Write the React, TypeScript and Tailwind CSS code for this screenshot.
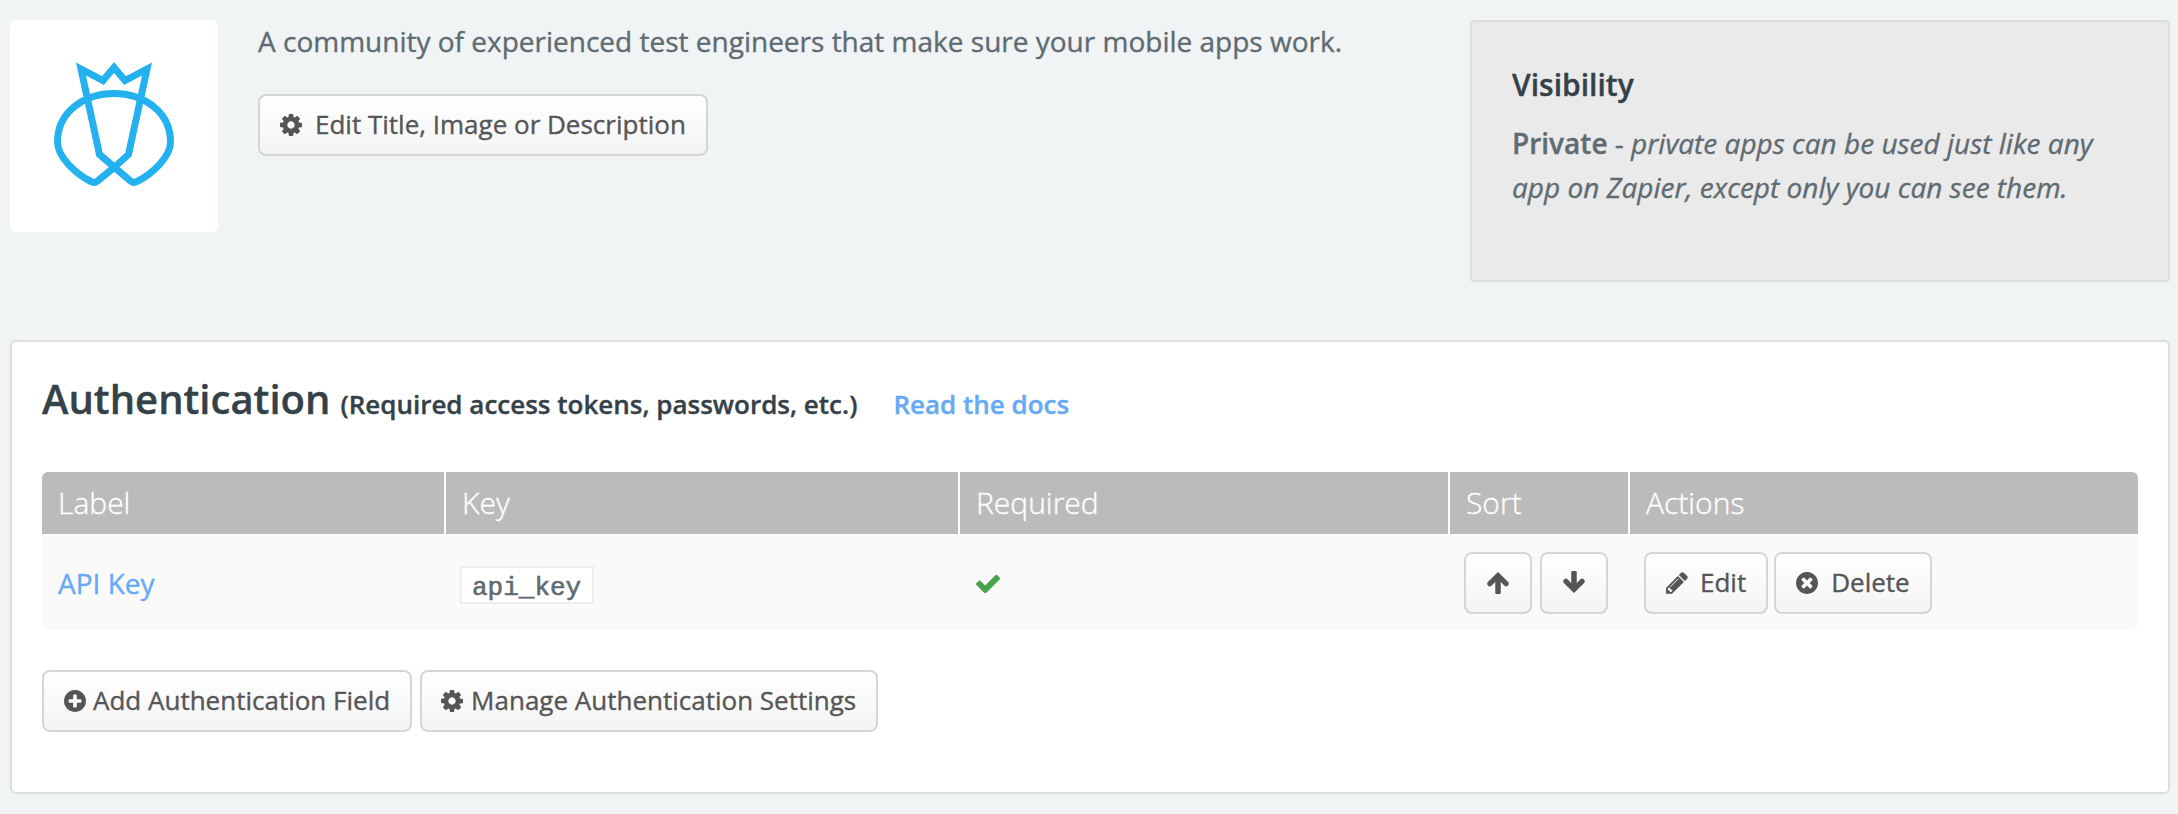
import React from "react";
import type { ReactNode } from "react";

const PATHS = {
  cog: "M1024 896q0-106-75-181t-181-75-181 75-75 181 75 181 181 75 181-75 75-181zm512-109v222q0 12-8 23t-20 13l-185 28q-19 54-39 91 35 50 107 138 10 12 10 25t-9 23q-27 37-99 108t-94 71q-12 0-26-9l-138-108q-44 23-91 38-16 136-29 186-7 28-36 28h-222q-14 0-24.500-8.500t-11.500-21.500l-28-184q-49-16-90-37l-141 107q-10 9-25 9-14 0-25-11-126-114-165-168-7-10-7-23 0-12 8-23 15-21 51-66.500t54-70.500q-27-50-41-99l-183-27q-13-2-21-12.500t-8-23.500v-222q0-12 8-23t19-13l186-28q14-46 39-92-40-57-107-138-10-12-10-24 0-10 9-23 26-36 98.500-107.500t94.500-71.500q13 0 26 10l138 107q44-23 91-38 16-136 29-186 7-28 36-28h222q14 0 24.500 8.500t11.500 21.500l28 184q49 16 90 37l142-107q9-9 24-9 13 0 25 10 129 119 165 170 7 8 7 22 0 12-8 23-15 21-51 66.500t-54 70.500q26 50 41 98l183 28q13 2 21 12.500t8 23.500z",
  pencil: "M491 1536l91-91-235-235-91 91v107h128v128h107zm523-928q0-22-22-22-10 0-17 7l-542 542q-7 7-7 17 0 22 22 22 10 0 17-7l542-542q7-7 7-17zm-54-192l416 416-832 832h-416v-416zm683 96q0 53-37 90l-166 166-416-416 166-165q36-38 90-38 53 0 91 38l235 234q37 39 37 91z",
  check: "M1671 566q0 40-28 68l-724 724-136 136q-28 28-68 28t-68-28l-136-136-362-362q-28-28-28-68t28-68l136-136q28-28 68-28t68 28l294 295 656-657q28-28 68-28t68 28l136 136q28 28 28 68z",
  remove: "M1277 1122q0-26-19-45l-181-181 181-181q19-19 19-45 0-27-19-46l-90-90q-19-19-46-19-26 0-45 19l-181 181-181-181q-19-19-45-19-27 0-46 19l-90 90q-19 19-19 46 0 26 19 45l181 181-181 181q-19 19-19 45 0 27 19 46l90 90q19 19 46 19 26 0 45-19l181-181 181 181q19 19 45 19 27 0 46-19l90-90q19-19 19-46zm387-226q0 209-103 385.500t-279.500 279.500-385.500 103-385.500-103-279.500-279.500-103-385.500 103-385.500 279.500-279.500 385.500-103 385.500 103 279.500 279.500 103 385.500z",
  plus: "M1344 960v-128q0-26-19-45t-45-19h-256v-256q0-26-19-45t-45-19h-128q-26 0-45 19t-19 45v256h-256q-26 0-45 19t-19 45v128q0 26 19 45t45 19h256v256q0 26 19 45t45 19h128q26 0 45-19t19-45v-256h256q26 0 45-19t19-45zm320-64q0 209-103 385.500t-279.500 279.500-385.500 103-385.500-103-279.500-279.500-103-385.500 103-385.500 279.500-279.500 385.500-103 385.500 103 279.500 279.500 103 385.500z",
};

const VIEW = {
  cog: "0 128 1536 1536",
  pencil: "128 138 1536 1536",
  check: "121 344 1550 1228",
  remove: "128 128 1536 1536",
  plus: "128 128 1536 1536",
};

function Icon({ name, className = "size-[22px]" }: { name: keyof typeof PATHS; className?: string }) {
  return (
    <svg viewBox={VIEW[name]} className={`shrink-0 ${className}`} fill="currentColor" preserveAspectRatio="none" aria-hidden>
      <path d={PATHS[name]} />
    </svg>
  );
}

function Arrow({ down = false }: { down?: boolean }) {
  return (
    <svg viewBox="0 0 68 66" className={down ? "-mt-0.5 size-[22px] rotate-180" : "size-[22px]"} preserveAspectRatio="none" aria-hidden>
      <path d="M9 35L34 11L59 35" fill="none" stroke="currentColor" strokeWidth="16" strokeLinecap="round" />
      <rect x="25.500" y="12" width="17" height="54" rx="4" fill="currentColor" />
    </svg>
  );
}

function Button({ children, className = "px-5" }: { children: ReactNode; className?: string }) {
  return (
    <button
      type="button"
      className={`flex h-[62px] shrink-0 items-center rounded-[8px] border-2 border-[#d5d5d5] bg-linear-to-b from-white to-[#f4f4f4] text-[26px] leading-9 whitespace-nowrap text-[#555] ${className}`}
    >
      {children}
    </button>
  );
}

function Logo() {
  return (
    <svg viewBox="0 0 208 212" className="h-[212px] w-[208px]" fill="none" stroke="#24b1ef" strokeWidth="7" aria-hidden>
      <path d="M104 147.500L87.500 161Q84.500 163.500 81 161.500C66 154 47.500 137 47.500 122C47.500 92 74 73.500 104 73.500S160.500 92 160.500 122C160.500 137 142 154 127 161.500Q123.500 163.500 120.500 161L89.500 134.500L71 49L93 60.500L104 47.500L115 60.500L137 49L118.500 134.500L104 147.500" />
    </svg>
  );
}

const COLUMNS = "grid grid-cols-[402px_512px_488px_178px_508px] gap-0.5";

export default function App() {
  return (
    <div className="min-h-[814px] w-[2178px] bg-[#f0f4f5] px-2 pt-5 font-['Open_Sans','Liberation_Sans',sans-serif] text-[28px] leading-[44px] text-[#5f6b72] [-webkit-text-stroke:0.35px]">
      <div className="ml-0.5 flex w-[2160px] items-start">
        <div className="h-[212px] w-[208px] overflow-hidden rounded-md bg-white">
          <Logo />
        </div>
        <div className="ml-10 flex flex-1 flex-col items-start">
          <p className="-mt-px">A community of experienced test engineers that make sure your mobile apps work.</p>
          <div className="mt-[31px]">
            <Button>
              <Icon name="cog" />
              <span className="-mt-0.5 ml-[13px]">Edit Title, Image or Description</span>
            </Button>
          </div>
        </div>
        <aside className="h-[262px] w-[700px] rounded-[4px] border-2 border-[#ddd] bg-[#eaeaea] px-10 pt-10">
          <h3 className="text-[30px] leading-[46px] font-semibold text-[#354148]">Visibility</h3>
          <p className="mt-[13px] whitespace-nowrap">
            <strong className="font-semibold">Private</strong> - <em>private apps can be used just like any</em>
            <br />
            <em>app on Zapier, except only you can see them.</em>
          </p>
        </aside>
      </div>

      <section className="mt-[58px] ml-0.5 h-[454px] w-[2160px] rounded-md border-2 border-[#ddd] bg-white px-[30px] pt-[27px]">
        <h2 className="flex h-[60px] items-baseline font-semibold whitespace-pre text-[#354148]">
          <span className="text-[40px] leading-[60px]">Authentication</span>
          <span className="ml-2.5 text-[26px] leading-9">(Required access tokens, passwords, etc.)</span>
          <a className="ml-9 text-[26px] leading-9 text-[#66aaf5]">Read the docs</a>
        </h2>

        <div className="mt-[43px] w-[2096px]">
          <div className={`${COLUMNS} overflow-hidden rounded-t-md text-[30px] leading-[61px] font-light text-white`}>
            {["Label", "Key", "Required", "Sort", "Actions"].map((title) => (
              <div key={title} className="h-[62px] bg-[#bbb] px-4">
                {title}
              </div>
            ))}
          </div>
          <div className={`${COLUMNS} mt-0.5 h-[94px] items-center rounded-b-md bg-[#fafafa]`}>
            <a className="px-4 text-[#66aaf5]">API Key</a>
            <div className="flex px-3.5 pt-1">
              <code className="h-[38px] w-[134px] border-2 border-[#eee] bg-white px-2.5 font-['Liberation_Mono',monospace] text-[26px] leading-[40px] [-webkit-text-stroke:0.6px]">
                api_key
              </code>
            </div>
            <div className="px-4 pt-0.5 text-[#48a44c]">
              <Icon name="check" className="h-[19px] w-6" />
            </div>
            <div className="flex gap-2 px-3.5">
              <Button className="w-[68px] justify-center">
                <Arrow />
              </Button>
              <Button className="w-[68px] justify-center">
                <Arrow down />
              </Button>
            </div>
            <div className="flex gap-1.5 px-3.5">
              <Button>
                <Icon name="pencil" />
                <span className="-mt-0.5 ml-3">Edit</span>
              </Button>
              <Button className="w-[158px] pl-5">
                <Icon name="remove" />
                <span className="-mt-0.5 ml-[13px]">Delete</span>
              </Button>
            </div>
          </div>
        </div>

        <div className="mt-10 flex gap-2">
          <Button>
            <Icon name="plus" />
            <span className="-mt-0.5 ml-[7px]">Add Authentication Field</span>
          </Button>
          <Button className="pr-5 pl-[19px]">
            <Icon name="cog" />
            <span className="-mt-0.5 ml-2">Manage Authentication Settings</span>
          </Button>
        </div>
      </section>
    </div>
  );
}
